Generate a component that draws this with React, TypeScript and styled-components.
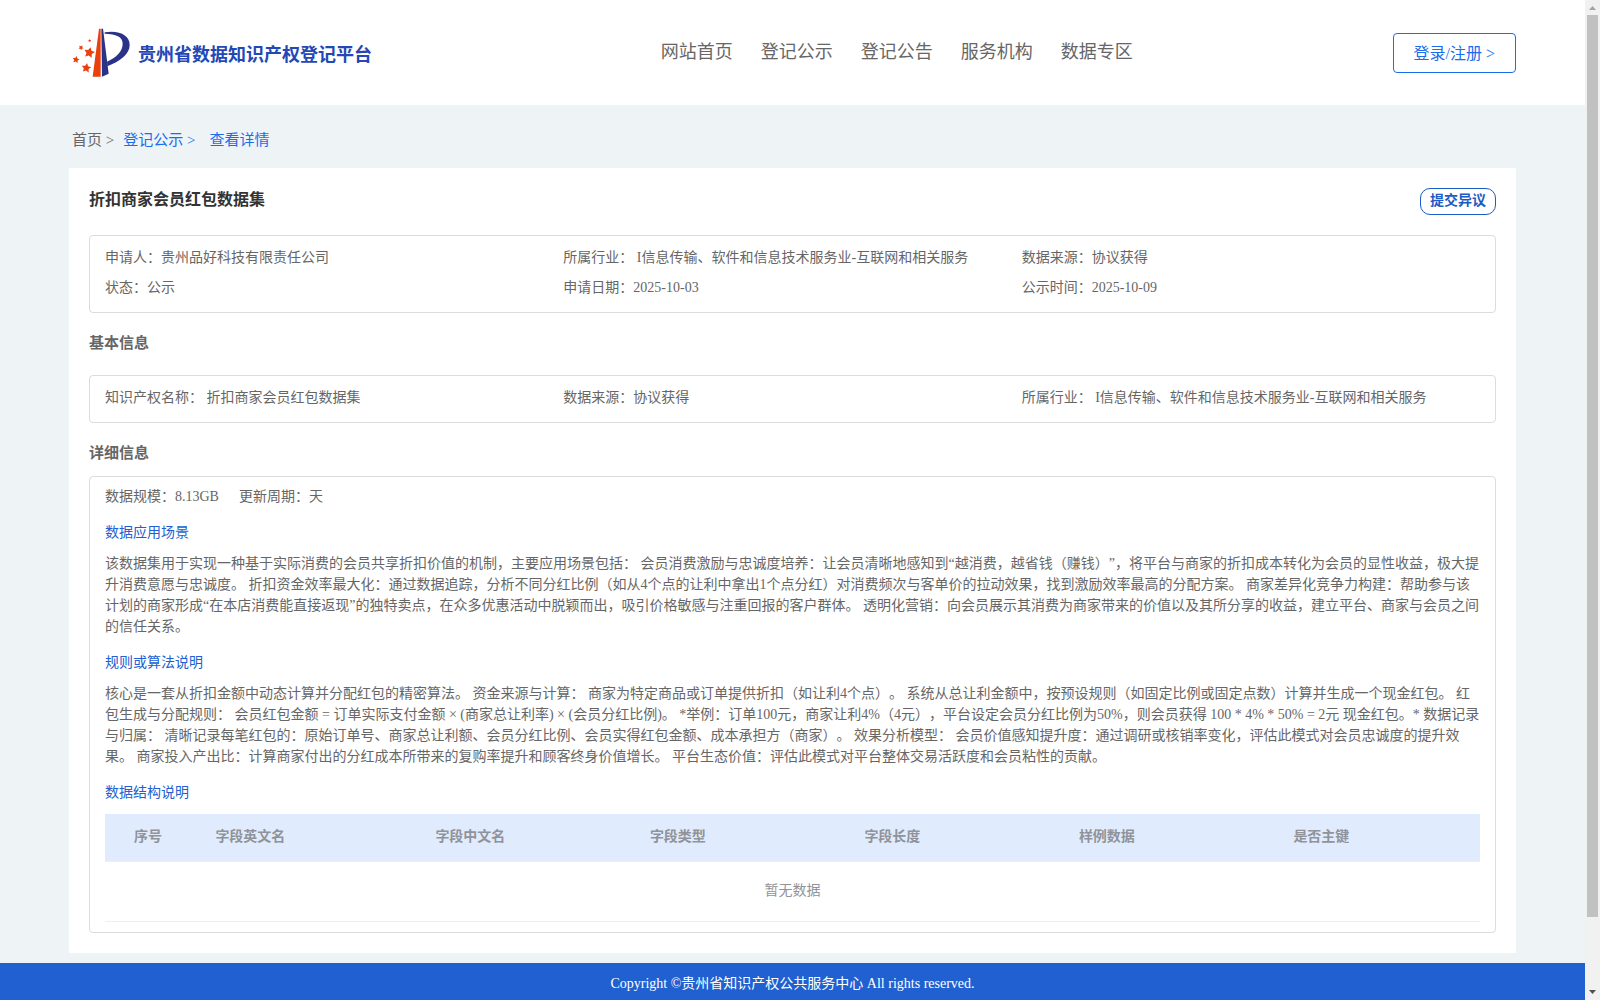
import React from "react";
import styled, { createGlobalStyle } from "styled-components";

const GlobalStyle = createGlobalStyle`
  * { box-sizing: border-box; }
  body {
    margin: 0;
    color: #666;
    font-family: "Liberation Serif", "Noto Sans CJK SC", serif;
    font-size: 14px;
    text-spacing-trim: space-all;
  }
  h1, h2, h3, p, ul, ol, dl, dd { margin: 0; padding: 0; }
  ul, ol { list-style: none; }
  a { color: inherit; text-decoration: none; }
  button { font-family: inherit; background: #fff; cursor: pointer; }
`;

const Frame = styled.div`
  display: flex;
  height: 100vh;
`;

const Scroller = styled.div`
  flex: 1;
  min-width: 0;
  overflow-y: auto;
  scrollbar-width: none;
  background: #eef3f6;
`;

const ScrollBar = styled.div`
  display: flex;
  flex-direction: column;
  width: 15px;
  background: #f1f1f1;
`;

const ScrollArrow = styled.svg`
  display: block;
  flex: none;
  width: 15px;
  height: 15px;
`;

const ScrollTrack = styled.div`
  flex: 1;
  padding: 0 2px;
`;

const ScrollThumb = styled.div`
  height: 93%;
  background: #c1c1c1;
`;

const Header = styled.header`
  display: flex;
  align-items: center;
  justify-content: space-between;
  height: 105px;
  padding: 0 69px;
  background: #fff;
`;

const Brand = styled.a`
  display: flex;
  align-items: center;
  gap: 8px;
  width: 332px;
  padding-left: 3px;
  color: #2447b5;
  font-size: 18px;
  font-weight: 700;
  line-height: 26px;
`;

const BrandName = styled.span`
  padding-top: 4px;
`;

const NavList = styled.ul`
  display: flex;
  gap: 28px;
  padding-bottom: 2px;
  font-size: 18px;
  line-height: 26px;
`;

const LoginButton = styled.button`
  height: 40px;
  padding: 0 20px 2px;
  border: 1px solid #1a6dec;
  border-radius: 4px;
  color: #1a6dec;
  font-size: 16px;
`;

const Crumbs = styled.ol`
  display: flex;
  margin: 0 69px;
  padding: 23px 3px 16px;
  font-size: 15px;
  line-height: 24px;
`;

const Crumb = styled.li<{ $active?: boolean; $space?: number }>`
  margin-right: ${(p) => p.$space ?? 0}px;
  color: ${(p) => (p.$active ? "#1a6dec" : "#666")};
`;

const Card = styled.main`
  margin: 0 69px 10px;
  padding: 20px;
  background: #fff;
`;

const CardHead = styled.div`
  display: flex;
  align-items: flex-start;
  justify-content: space-between;
  margin-bottom: 20px;
`;

const Title = styled.h1`
  color: #333;
  font-size: 16px;
  line-height: 24px;
`;

const ObjectionButton = styled.button`
  height: 27px;
  padding: 0 9px 1px;
  border: 1px solid #1c5bc4;
  border-radius: 10px;
  color: #1c5bc4;
  font-size: 14px;
  font-weight: 700;
  line-height: 20px;
`;

const SectionTitle = styled.h2<{ $space: number }>`
  padding: 20px 0 ${(p) => p.$space}px;
  font-size: 15px;
  line-height: 20px;
`;

const InfoBox = styled.dl`
  display: grid;
  grid-template-columns: repeat(3, 1fr);
  padding: 7px 15px 9px;
  border: 1px solid #dcdcdc;
  border-radius: 4px;
  line-height: 30px;
`;

const Field = styled.div`
  display: flex;
  white-space: pre;
`;

const DetailBox = styled.section`
  padding: 5px 15px 10px;
  border: 1px solid #dcdcdc;
  border-radius: 4px;
`;

const Meta = styled.dl`
  display: flex;
  gap: 20px;
  margin-bottom: 6px;
  line-height: 30px;
`;

const SubTitle = styled.h3`
  margin-bottom: 5px;
  color: #2060d0;
  font-size: 14px;
  font-weight: 400;
  line-height: 30px;
`;

const Paragraph = styled.p`
  margin-bottom: 11px;
  line-height: 21px;
`;

const Table = styled.table`
  width: 100%;
  margin-top: 6px;
  table-layout: fixed;
  border-collapse: separate;
  border-spacing: 0;
  color: #909399;
`;

const HeadCell = styled.th<{ $width?: string; $indent?: boolean }>`
  width: ${(p) => p.$width ?? "auto"};
  height: 48px;
  padding: 0 10px 5px ${(p) => (p.$indent ? 29 : 10)}px;
  border-bottom: 1px solid #ebeef5;
  background: #e0ecfe;
  text-align: left;
`;

const EmptyCell = styled.td`
  height: 60px;
  padding: 0 0 5px;
  border-bottom: 1px solid #ebeef5;
  text-align: center;
`;

const Footer = styled.footer`
  height: 112px;
  padding-top: 10px;
  background: #2060d0;
  color: #fff;
  font-size: 14px;
  line-height: 22px;
  text-align: center;
`;

const star = (cx: number, cy: number, r: number, turn: number) =>
  Array.from({ length: 10 }, (_, i) => {
    const radius = i % 2 ? r * 0.5 : r;
    const a = ((i * 36 - 90 + turn) * Math.PI) / 180;
    return `${(cx + radius * Math.cos(a)).toFixed(1)},${(cy + radius * Math.sin(a)).toFixed(1)}`;
  }).join(" ");

const Logo = () => (
  <svg width="58" height="50" viewBox="36 25 174 150" aria-hidden="true">
    <path d="M117 27h5v144H98z" fill="#e8410f" />
    <path d="M124 27h5l17 135-20 9z" fill="#2b3389" />
    <path
      d="M134 38C180 31 209 48 209 76c0 28-29 49-67 64l-1-14c28-13 47-31 47-54 0-21-20-29-54-30z"
      fill="#2b3389"
    />
    <g fill="#e8410f">
      <polygon points={star(88, 99, 17, 12)} />
      <polygon points={star(79, 145, 15, 8)} />
      <polygon points={star(48, 120, 11, 10)} />
      <polygon points={star(63, 84, 8, 30)} />
      <polygon points={star(89, 63, 5, 0)} />
    </g>
  </svg>
);

const navItems = ["网站首页", "登记公示", "登记公告", "服务机构", "数据专区"];

const industry = " I信息传输、软件和信息技术服务业-互联网和相关服务";

const summary = [
  ["申请人：", "贵州品好科技有限责任公司"],
  ["所属行业：", industry],
  ["数据来源：", "协议获得"],
  ["状态：", "公示"],
  ["申请日期：", "2025-10-03"],
  ["公示时间：", "2025-10-09"],
];

const basics = [
  ["知识产权名称：", " 折扣商家会员红包数据集"],
  ["数据来源：", "协议获得"],
  ["所属行业：", industry],
];

const columns = [
  { label: "序号", width: "7.3%" },
  { label: "字段英文名", width: "16%" },
  { label: "字段中文名", width: "15.6%" },
  { label: "字段类型", width: "15.6%" },
  { label: "字段长度", width: "15.6%" },
  { label: "样例数据", width: "15.6%" },
  { label: "是否主键" },
];

const Fields = ({ items }: { items: string[][] }) => (
  <InfoBox>
    {items.map(([name, value]) => (
      <Field key={name}>
        <dt>{name}</dt>
        <dd>{value}</dd>
      </Field>
    ))}
  </InfoBox>
);

export default function App() {
  return (
    <Frame>
      <GlobalStyle />
      <Scroller>
        <Header>
          <Brand href="#">
            <Logo />
            <BrandName>贵州省数据知识产权登记平台</BrandName>
          </Brand>
          <nav>
            <NavList>
              {navItems.map((item) => (
                <li key={item}>
                  <a href="#">{item}</a>
                </li>
              ))}
            </NavList>
          </nav>
          <LoginButton type="button">登录/注册 &gt;</LoginButton>
        </Header>

        <nav>
          <Crumbs>
            <Crumb $space={9}><a href="#">首页</a> &gt;</Crumb>
            <Crumb $active $space={14}><a href="#">登记公示</a> &gt;</Crumb>
            <Crumb $active><a href="#">查看详情</a></Crumb>
          </Crumbs>
        </nav>

        <Card>
          <CardHead>
            <Title>折扣商家会员红包数据集</Title>
            <ObjectionButton type="button">提交异议</ObjectionButton>
          </CardHead>
          <Fields items={summary} />

          <SectionTitle $space={22}>基本信息</SectionTitle>
          <Fields items={basics} />

          <SectionTitle $space={13}>详细信息</SectionTitle>
          <DetailBox>
            <Meta>
              <Field>
                <dt>数据规模：</dt>
                <dd>8.13GB</dd>
              </Field>
              <Field>
                <dt>更新周期：</dt>
                <dd>天</dd>
              </Field>
            </Meta>

            <SubTitle>数据应用场景</SubTitle>
            <Paragraph>
              该数据集用于实现一种基于实际消费的会员共享折扣价值的机制，主要应用场景包括： 会员消费激励与忠诚度培养：让会员清晰地感知到“越消费，越省钱（赚钱）”，将平台与商家的折扣成本转化为会员的显性收益，极大提升消费意愿与忠诚度。 折扣资金效率最大化：通过数据追踪，分析不同分红比例（如从4个点的让利中拿出1个点分红）对消费频次与客单价的拉动效果，找到激励效率最高的分配方案。 商家差异化竞争力构建：帮助参与该计划的商家形成“在本店消费能直接返现”的独特卖点，在众多优惠活动中脱颖而出，吸引价格敏感与注重回报的客户群体。 透明化营销：向会员展示其消费为商家带来的价值以及其所分享的收益，建立平台、商家与会员之间的信任关系。
            </Paragraph>

            <SubTitle>规则或算法说明</SubTitle>
            <Paragraph>
              核心是一套从折扣金额中动态计算并分配红包的精密算法。 资金来源与计算： 商家为特定商品或订单提供折扣（如让利4个点）。 系统从总让利金额中，按预设规则（如固定比例或固定点数）计算并生成一个现金红包。 红包生成与分配规则： 会员红包金额 = 订单实际支付金额 × (商家总让利率) × (会员分红比例)。 *举例：订单100元，商家让利4%（4元），平台设定会员分红比例为50%，则会员获得 100 * 4% * 50% = 2元 现金红包。* 数据记录与归属： 清晰记录每笔红包的：原始订单号、商家总让利额、会员分红比例、会员实得红包金额、成本承担方（商家）。 效果分析模型： 会员价值感知提升度：通过调研或核销率变化，评估此模式对会员忠诚度的提升效果。 商家投入产出比：计算商家付出的分红成本所带来的复购率提升和顾客终身价值增长。 平台生态价值：评估此模式对平台整体交易活跃度和会员粘性的贡献。
            </Paragraph>

            <SubTitle>数据结构说明</SubTitle>
            <Table>
              <thead>
                <tr>
                  {columns.map((column, index) => (
                    <HeadCell key={column.label} scope="col" $width={column.width} $indent={index === 0}>
                      {column.label}
                    </HeadCell>
                  ))}
                </tr>
              </thead>
              <tbody>
                <tr>
                  <EmptyCell colSpan={columns.length}>暂无数据</EmptyCell>
                </tr>
              </tbody>
            </Table>
          </DetailBox>
        </Card>

        <Footer>Copyright ©贵州省知识产权公共服务中心 All rights reserved.</Footer>
      </Scroller>

      <ScrollBar aria-hidden="true">
        <ScrollArrow viewBox="0 0 15 15">
          <path d="M4 10l3.5-4L11 10z" fill="#a3a3a3" />
        </ScrollArrow>
        <ScrollTrack>
          <ScrollThumb />
        </ScrollTrack>
        <ScrollArrow viewBox="0 0 15 15">
          <path d="M4 5l3.5 4L11 5z" fill="#505050" />
        </ScrollArrow>
      </ScrollBar>
    </Frame>
  );
}
